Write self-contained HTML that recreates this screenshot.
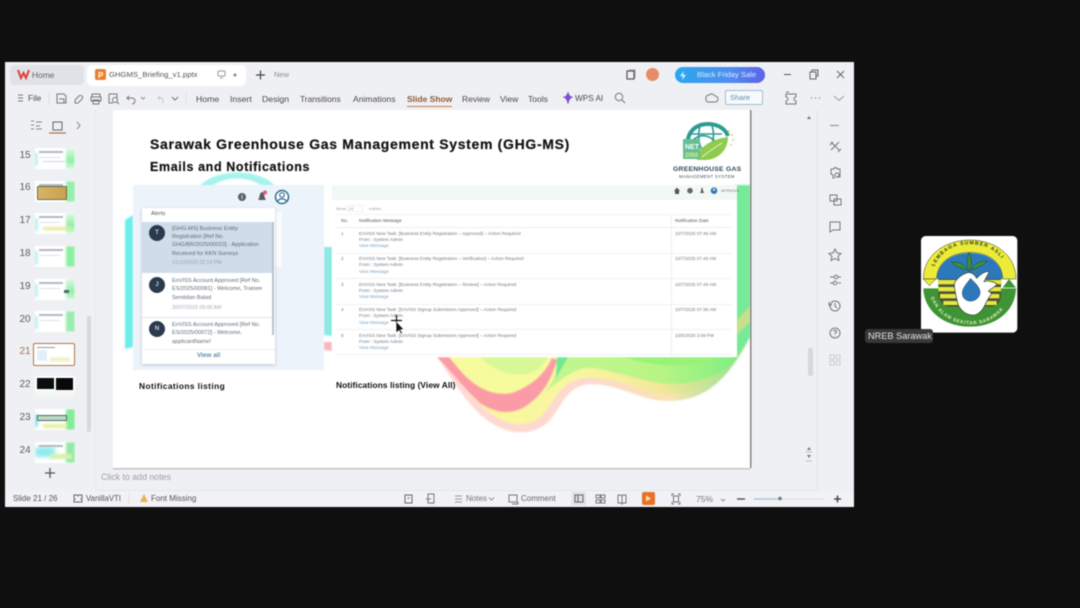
<!DOCTYPE html>
<html lang="en"><head><meta charset="utf-8"><title>GHGMS Briefing</title>
<style>
html,body{margin:0;padding:0;width:1080px;height:608px;overflow:hidden;background:#0f0f10;font-family:"Liberation Sans",sans-serif}
#w{position:absolute;left:0;top:0;width:1080px;height:608px;filter:blur(.4px)}
.a{position:absolute}
.t{position:absolute;white-space:nowrap;line-height:12px;height:12px;color:#4a4a4a}
.n{position:absolute;left:19px;width:12px;font-size:10px;line-height:12px;color:#5c5c5c;text-align:center}
.th{position:absolute;left:35px;width:40px;height:21px;background:#fff;overflow:hidden}
.th i{position:absolute;display:block}
.g{right:0;top:0;width:9px;height:21px;background:linear-gradient(180deg,#dff8e4,#8ef0a6 60%,#d9f8df);filter:blur(1px)}
.c{left:-1px;top:5px;width:4px;height:13px;background:#bff3ee;filter:blur(1px)}
.l{left:4px;top:3px;width:24px;height:2px;background:#b4bac0}
.l2{left:5px;top:9px;width:20px;height:1px;background:#dde3e8}
.r{position:absolute;font-size:4.6px;line-height:6px;height:6px;white-space:nowrap;color:#757a82;left:359px}
.b{color:#7ba6c6}
.ai{position:absolute;font-size:5.6px;line-height:8px;height:8px;white-space:nowrap;color:#626a76;left:172px}
.av{position:absolute;left:149px;width:16px;height:16px;border-radius:50%;background:#2c3a4e;color:#c9d2dc;font-size:6px;line-height:16px;text-align:center;font-weight:bold}
</style></head><body><div id="w">

<!-- window -->
<div class="a" style="left:5px;top:62px;width:849px;height:445px;background:#eff0f4"></div>
<div class="a" style="left:10px;top:65px;width:74px;height:20px;background:#e1e2e7;border-radius:4px"></div>
<div class="a" style="left:87px;top:65px;width:159px;height:21px;background:#fff;border-radius:5px"></div>
<div class="a" style="left:95px;top:110px;width:1px;height:380px;background:#e6e7eb"></div>
<div class="a" style="left:817px;top:110px;width:1px;height:385px;background:#e3e4e8"></div>
<div class="a" style="left:95px;top:490px;width:722px;height:1px;background:#e6e7eb"></div>
<div class="a" style="left:5px;top:491px;width:849px;height:16px;background:#f1f2f5"></div>

<!-- tab and menu text -->
<div class="t" style="left:32px;top:69px;font-size:8.4px;color:#666">Home</div>
<div class="t" style="left:109px;top:69px;font-size:7.7px;color:#555">GHGMS_Briefing_v1.pptx</div>
<div class="t" style="left:274px;top:69px;font-size:7.5px;color:#8a8d94">New</div>
<div class="t" style="left:28px;top:93px;font-size:8.2px">File</div>
<div class="t" style="left:196px;top:93px;font-size:8.7px">Home</div>
<div class="t" style="left:230px;top:93px;font-size:8.7px">Insert</div>
<div class="t" style="left:262px;top:93px;font-size:8.7px">Design</div>
<div class="t" style="left:300px;top:93px;font-size:8.4px">Transitions</div>
<div class="t" style="left:353px;top:93px;font-size:8.6px">Animations</div>
<div class="t" style="left:407px;top:93px;font-size:8.5px;font-weight:bold;color:#8f5a3a">Slide Show</div>
<div class="a" style="left:407px;top:106px;width:45px;height:1px;background:#c9814f"></div>
<div class="t" style="left:462px;top:93px;font-size:8.5px">Review</div>
<div class="t" style="left:500px;top:93px;font-size:8.5px">View</div>
<div class="t" style="left:528px;top:93px;font-size:8.5px">Tools</div>
<div class="t" style="left:575px;top:93px;font-size:8.2px">WPS AI</div>

<div class="a" style="left:675px;top:67px;width:90px;height:16px;border-radius:8px;background:linear-gradient(90deg,#2aa8ef,#4f8df0 60%,#5d63e8)"></div>
<div class="t" style="left:697px;top:69px;font-size:7.6px;color:#d8ecfb">Black Friday Sale</div>
<div class="a" style="left:725px;top:90px;width:38px;height:15px;border:1px solid #9cc0d4;border-radius:2px;background:#f7f9fb;box-sizing:border-box"></div>
<div class="t" style="left:730px;top:92px;font-size:7.5px;color:#5d8fb0">Share</div>
<div class="a" style="left:646px;top:68px;width:13px;height:13px;border-radius:50%;background:#e78c66"></div>

<!-- thumbnails -->
<div class="n" style="top:150px">15</div><div class="n" style="top:182px">16</div><div class="n" style="top:215px">17</div><div class="n" style="top:248px">18</div><div class="n" style="top:281px">19</div><div class="n" style="top:314px">20</div><div class="n" style="top:346px;color:#a5714f">21</div><div class="n" style="top:379px">22</div><div class="n" style="top:412px">23</div><div class="n" style="top:445px">24</div>
<div class="th" style="top:148px"><i class="g"></i><i class="c"></i><i class="l"></i><i class="l2"></i><i style="left:8px;top:13px;width:22px;height:1px;background:#cfd6da"></i></div>
<div class="th" style="top:181px"><i class="g" style="background:#96eeaa"></i><i class="l"></i><i style="left:2px;top:5px;width:28px;height:12px;background:linear-gradient(90deg,#d7b468,#c9a24e);border:1px solid #6a6a50;border-radius:1px"></i></div>
<div class="th" style="top:213px"><i class="g"></i><i class="c"></i><i class="l"></i><i class="l2"></i><i style="left:8px;top:14px;width:28px;height:3px;background:#e8e89a;filter:blur(1px)"></i></div>
<div class="th" style="top:246px"><i class="g" style="background:#8cf0a4"></i><i class="c"></i><i class="l"></i><i class="l2"></i></div>
<div class="th" style="top:279px"><i class="g"></i><i class="c"></i><i class="l"></i><i class="l2"></i><i style="left:29px;top:11px;width:5px;height:3px;background:#56647a"></i></div>
<div class="th" style="top:311px"><i class="g" style="background:#9cecb0"></i><i class="c"></i><i class="l"></i><i class="l2"></i></div>
<div class="a" style="left:33px;top:343px;width:42px;height:23px;box-sizing:border-box;border:1.5px solid #b0764d;border-radius:2px;background:#fff;overflow:hidden"><i class="a" style="left:3px;top:3px;width:18px;height:1px;background:#999"></i><i class="a" style="left:3px;top:6px;width:10px;height:11px;background:#e4eef8"></i><i class="a" style="left:16px;top:14px;width:20px;height:3px;background:#eaeeb0;filter:blur(1px)"></i></div>
<div class="th" style="top:376px"><i style="left:2px;top:2px;width:17px;height:11px;background:#07100f"></i><i style="left:21px;top:2px;width:17px;height:12px;background:#0a0808"></i><i style="left:0;top:15px;width:40px;height:6px;background:#f3f6f3"></i></div>
<div class="th" style="top:409px"><i class="g" style="background:#84ec96"></i><i class="c" style="background:#8cecee"></i><i style="left:2px;top:6px;width:28px;height:4px;background:#bcd9c8;border:1px solid #506a58"></i><i style="left:8px;top:15px;width:24px;height:4px;background:#e8f0a0;filter:blur(1px)"></i></div>
<div class="th" style="top:442px;"><i class="g" style="background:#92eaa4"></i><i style="left:0;top:5px;width:20px;height:10px;background:#8eeaf0;filter:blur(2px)"></i><i class="l"></i><i style="left:15px;top:12px;width:22px;height:5px;background:#d6f2a8;filter:blur(1px)"></i></div>
<div class="a" style="left:87px;top:316px;width:4px;height:116px;background:#d7d8dc;border-radius:2px"></div>
<div class="a" style="left:808px;top:348px;width:5px;height:28px;background:#d7d8dc;border-radius:2px"></div>

<!-- slide -->
<div class="a" style="left:113px;top:110px;width:637px;height:358px;background:#fff;box-shadow:1.5px 0 0 #858585,0 1.5px 0 #c4c4c4"></div>
<svg class="a" style="left:113px;top:110px" width="637" height="358" viewBox="113 110 637 358">
<defs>
<linearGradient id="w1" x1="0" x2="1" y1="0" y2="0"><stop offset="0" stop-color="#f9f99c"/><stop offset=".45" stop-color="#f7f6a0"/><stop offset=".72" stop-color="#f4e79a"/><stop offset=".88" stop-color="#bfe490"/><stop offset="1" stop-color="#78e882"/></linearGradient>
<linearGradient id="w2" x1="0" x2="1" y1="0" y2="0"><stop offset="0" stop-color="#ffd9d6"/><stop offset=".5" stop-color="#fdd9cc"/><stop offset=".75" stop-color="#f8e4b0"/><stop offset="1" stop-color="#84e488"/></linearGradient>
<linearGradient id="w3" x1="0" x2="1" y1="0" y2="0"><stop offset="0" stop-color="#c2f690"/><stop offset=".6" stop-color="#b8f584"/><stop offset="1" stop-color="#7eee80"/></linearGradient>
</defs>
<g style="filter:blur(.7px)">
<path d="M200 186 C215 168 260 168 275 186 L262 186 C248 176 226 176 212 186Z" fill="#a6f3ee"/>
<path d="M125 220 L133 215 L133 347 L125 349Z" fill="#6eeee8"/>
<path d="M324 247 L332 247 L332 336 L324 335Z" fill="#8ce9e6"/>
<path d="M324 342 L332 342 L332 351 L324 350Z" fill="#f7b8bc"/>
<path d="M735 185 L750 185 L750 337 L737 357 L735 357Z" fill="#76ea98"/>
<path d="M737 320 L750 306 L750 322 L737 335Z" fill="#c6e08c"/>
<path d="M437 357 C452 378 470 412 495 425 C512 435 535 436 550 420 C562 405 568 385 590 384 C620 384 640 401 668 401 C705 401 728 380 750 337 L737 357Z" fill="url(#w2)"/>
<path d="M442 357 C458 378 475 405 498 418 C515 427 532 427 545 412 C555 400 562 380 585 378 C615 376 640 392 668 394 C700 395 725 375 747 338 L737 357Z" fill="url(#w1)"/>
<path d="M449 357 C465 380 485 395 510 394 C532 390 546 375 553 357Z" fill="#f6fb9e"/>
<path d="M480 357 C495 372 515 378 530 373 C540 370 545 363 547 357Z" fill="#d8f898"/>
<path d="M437 357 C450 370 462 386 480 403 C498 415 515 415 530 403 C545 392 552 376 557 360 L552 358 C546 372 534 385 512 393 C490 397 472 385 458 368 L449 357Z" fill="#fb9ba6"/>
<path d="M557 357 L737 357 C725 372 700 385 668 384 C640 382 610 368 588 368 C575 368 560 380 545 392 C555 380 560 368 557 357Z" fill="url(#w3)"/>
<path d="M557 357 L568 357 L556 378Z" fill="#6fe890"/>
<path d="M625 357 C650 366 690 370 715 357Z" fill="#98f278"/>
</g>
</svg>

<div class="t" style="left:150px;top:136px;height:17px;line-height:17px;font-size:14px;font-weight:bold;color:#111;letter-spacing:.68px;-webkit-text-stroke:.2px #111">Sarawak Greenhouse Gas Management System (GHG-MS)</div>
<div class="t" style="left:150px;top:159px;height:16px;line-height:16px;font-size:12.5px;font-weight:bold;color:#111;letter-spacing:.62px;-webkit-text-stroke:.2px #111">Emails and Notifications</div>

<!-- GHG logo -->
<svg class="a" style="left:675px;top:120px" width="70" height="45" viewBox="675 120 70 45">
<path d="M688 146 C686 132 696 124 708 124 C719 124 726 130 728 136" fill="none" stroke="#2c9c92" stroke-width="4"/>
<path d="M693 140 C700 134 708 134 716 142 M700 126 C698 134 698 142 702 150 M712 126 C714 132 714 136 712 144 M690 134 L722 134" fill="none" stroke="#2c9c92" stroke-width="1.6"/>
<path d="M697 160 C697 147 712 139 728 137 C728 150 718 160 705 160Z" fill="#8fcc4e"/>
<path d="M702 157 C708 152 714 148 722 143" stroke="#e6f3c9" stroke-width="1" fill="none"/>
<rect x="683" y="139" width="17" height="20" fill="#64bf94"/>
<text x="685" y="149" font-size="7" font-weight="bold" fill="#f1fff6">NET</text>
<text x="685" y="157" font-size="6" font-weight="bold" fill="#e6ec82">2050</text>
<circle cx="729" cy="131" r="1" fill="#d6d27a"/><circle cx="732" cy="135" r="1" fill="#d6d27a"/><circle cx="733" cy="140" r="1" fill="#d6d27a"/><circle cx="731" cy="145" r="1" fill="#d6d27a"/>
</svg>
<div class="t" style="left:673px;top:164px;font-size:6.8px;font-weight:bold;color:#2e4a58;letter-spacing:.25px">GREENHOUSE GAS</div>
<div class="t" style="left:679px;top:171px;font-size:4.4px;color:#3d5562;letter-spacing:.3px">MANAGEMENT SYSTEM</div>

<!-- notifications panel -->
<div class="a" style="left:133px;top:185px;width:191px;height:185px;background:#edf3fb"></div>
<div class="a" style="left:275px;top:212px;width:7px;height:55px;background:#fafbfd"></div>
<div class="a" style="left:142px;top:208px;width:133px;height:156px;background:#fff;box-shadow:0 1px 3px rgba(70,90,110,.3)"></div>
<div class="a" style="left:142px;top:222px;width:131px;height:51px;background:#cfdcea"></div>
<div class="a" style="left:272px;top:222px;width:2px;height:113px;background:#b6c2cf"></div>
<div class="a" style="left:142px;top:317px;width:130px;height:1px;background:#dde2e8"></div>
<div class="a" style="left:142px;top:349px;width:133px;height:1px;background:#edf0f3"></div>
<div class="ai" style="left:151px;top:210px;color:#555">Alerts</div>
<div class="av" style="top:225px">T</div><div class="av" style="top:277px">J</div><div class="av" style="top:321px">N</div>
<div class="ai" style="top:225px">[GHG-MS] Business Entity</div>
<div class="ai" style="top:233px">Registration [Ref No.</div>
<div class="ai" style="top:241px">GHG/BR/2025/00023] - Application</div>
<div class="ai" style="top:250px">Received for KKN Surveys</div>
<div class="ai" style="top:259px;color:#9aa5b2;font-size:5.2px">21/10/2025 02:19 PM</div>
<div class="ai" style="top:277px">EnVISS Account Approved [Ref No.</div>
<div class="ai" style="top:285px">ES/2025/00081] - Welcome, Trainee</div>
<div class="ai" style="top:294px">Sembilan Balad</div>
<div class="ai" style="top:304px;color:#a3abb5;font-size:5.2px">30/07/2025 09:09 AM</div>
<div class="ai" style="top:321px">EnVISS Account Approved [Ref No.</div>
<div class="ai" style="top:329px">ES/2025/00072] - Welcome,</div>
<div class="ai" style="top:338px">applicantName!</div>
<div class="ai" style="left:197px;top:352px;color:#5f8eb0;font-weight:bold;font-size:6.4px">View all</div>
<svg class="a" style="left:234px;top:188px" width="56" height="18" viewBox="234 188 56 18">
<circle cx="242" cy="197" r="4" fill="#5a6068"/><rect x="241.5" y="195" width="1" height="4" fill="#ddd"/>
<path d="M258 200 C260 198 259 193 262 192 C265 193 264 198 266 200Z" fill="#5b5a66"/><circle cx="265" cy="192.500" r="2" fill="#e0586c"/>
<circle cx="282" cy="197" r="6.500" fill="#fff" stroke="#2e6f92" stroke-width="1.500"/><circle cx="282" cy="195" r="2.300" fill="none" stroke="#2e6f92" stroke-width="1.200"/><path d="M277.500 201.500 C279 198 285 198 286.500 201.500" fill="none" stroke="#2e6f92" stroke-width="1.200"/>
</svg>
<div class="t" style="left:139px;top:380px;font-size:8.4px;font-weight:bold;color:#111;letter-spacing:.4px">Notifications listing</div>

<!-- table card -->
<div class="a" style="left:332px;top:185px;width:405px;height:172px;background:#fff"></div>
<div class="a" style="left:332px;top:185px;width:405px;height:15px;background:#f2f8f6"></div>
<div class="a" style="left:671px;top:214px;width:1px;height:141px;background:#eceef1"></div>
<div class="a" style="left:336px;top:214px;width:396px;height:1px;background:#f3f4f6"></div>
<div class="a" style="left:336px;top:227px;width:396px;height:1px;background:#eceef1"></div>
<div class="a" style="left:336px;top:253px;width:396px;height:1px;background:#f0f1f4"></div>
<div class="a" style="left:336px;top:278px;width:396px;height:1px;background:#f0f1f4"></div>
<div class="a" style="left:336px;top:304px;width:396px;height:1px;background:#f0f1f4"></div>
<div class="a" style="left:336px;top:329px;width:396px;height:1px;background:#f0f1f4"></div>
<div class="a" style="left:336px;top:354px;width:396px;height:1px;background:#f0f1f4"></div>
<svg class="a" style="left:670px;top:185px" width="60" height="12" viewBox="670 185 60 12">
<path d="M674 191 L677 187.500 L680 191 L679 191 L679 194 L675 194 L675 191Z" fill="#555"/>
<circle cx="690" cy="190.700" r="2.800" fill="#666"/>
<path d="M700 193 C701.500 192 701 188 702 187.500 C703 188 702.500 192 704.500 193Z" fill="#555"/>
<circle cx="714" cy="190.700" r="3.300" fill="#2f78b8"/><circle cx="714" cy="189.700" r="1.100" fill="#e8f0f8"/>
</svg>
<div class="r" style="left:721px;top:188px;font-size:3.8px">APPROVE</div>
<div class="r" style="left:336px;top:206px;font-size:4px;color:#999">Show</div>
<div class="a" style="left:347px;top:205px;width:16px;height:7px;border:1px solid #f0f0f0;box-sizing:border-box"></div>
<div class="r" style="left:349px;top:206px;font-size:4px;color:#999">10</div>
<div class="r" style="left:369px;top:206px;font-size:4px;color:#999">entries</div>
<div class="r" style="left:341px;top:218px;color:#555">No.</div>
<div class="r" style="top:218px;color:#555">Notification Message</div>
<div class="r" style="left:675px;top:218px;color:#555">Notification Date</div>

<div class="r" style="left:341px;top:231px">1</div>
<div class="r" style="top:231px">EnVISS New Task: [Business Entity Registration – Approved] – Action Required</div>
<div class="r" style="top:237px">From : System Admin</div>
<div class="r b" style="top:243px">View Message</div>
<div class="r" style="left:675px;top:231px">10/7/2025 07:49 AM</div>

<div class="r" style="left:341px;top:256px">2</div>
<div class="r" style="top:256px">EnVISS New Task: [Business Entity Registration – Verification] – Action Required</div>
<div class="r" style="top:262px">From : System Admin</div>
<div class="r b" style="top:269px">View Message</div>
<div class="r" style="left:675px;top:256px">10/7/2025 07:49 AM</div>

<div class="r" style="left:341px;top:282px">3</div>
<div class="r" style="top:282px">EnVISS New Task: [Business Entity Registration – Review] – Action Required</div>
<div class="r" style="top:288px">From : System Admin</div>
<div class="r b" style="top:294px">View Message</div>
<div class="r" style="left:675px;top:282px">10/7/2025 07:49 AM</div>

<div class="r" style="left:341px;top:307px">4</div>
<div class="r" style="top:307px">EnVISS New Task: [EnVISS Signup Submission Approved] – Action Required</div>
<div class="r" style="top:313px">From : System Admin</div>
<div class="r b" style="top:320px">View Message</div>
<div class="r" style="left:675px;top:307px">10/7/2025 07:39 AM</div>

<div class="r" style="left:341px;top:333px">5</div>
<div class="r" style="top:333px">EnVISS New Task: [EnVISS Signup Submission Approved] – Action Required</div>
<div class="r" style="top:339px">From : System Admin</div>
<div class="r b" style="top:345px">View Message</div>
<div class="r" style="left:675px;top:333px">10/5/2025 3:09 PM</div>

<div class="t" style="left:336px;top:379px;font-size:8.4px;font-weight:bold;color:#111;letter-spacing:.07px">Notifications listing (View All)</div>

<!-- cursor -->
<svg class="a" style="left:390px;top:314px" width="18" height="22" viewBox="390 314 18 22">
<path d="M396 321 L396 333 L399 330.500 L401 334 L402.500 333 L400.500 329.800 L404 329.500Z" fill="#111" stroke="#fff" stroke-width=".7"/>
<path d="M391 320.500 H402 M396.500 315 V322" stroke="#111" stroke-width="1.200"/>
</svg>

<!-- chrome icons -->
<svg class="a" style="left:0;top:0" width="1080" height="608" viewBox="0 0 1080 608" fill="none" stroke="#777" stroke-width="1">
<path d="M18 70 L21 78 L23.500 73 L26 78 L29 70" stroke="#d8433f" stroke-width="2"/>
<rect x="95" y="69" width="11" height="11" rx="2" fill="#e8812f" stroke="none"/>
<text x="98" y="78" font-size="8" font-weight="bold" fill="#fff" stroke="none" font-family="Liberation Sans">P</text>
<rect x="218" y="71" width="7" height="5" rx="1" stroke="#999"/><path d="M220 78 h3" stroke="#999"/>
<circle cx="235" cy="75" r="1.500" fill="#888" stroke="none"/>
<path d="M256 75 h9 M260.500 70.500 v9" stroke="#444" stroke-width="1.200"/>
<path d="M18 95 h5 M18 98 h5 M18 101 h5"/>
<path d="M49 92 V105" stroke="#ddd"/>
<path d="M57 94 h7 l2 2 v7 h-9Z M59 99 h5 v4 h-5" />
<path d="M75 100 l4 -4 a2 2 0 0 1 3 3 l-4 4 M75 100 l0 3 h3"/>
<path d="M92 97 v-3 h8 v3 M91 97 h10 v4 h-9 h-1Z M93 100 h6 v4 h-6Z"/>
<path d="M109 94 h8 v4 M109 94 v9 h4"/><circle cx="115" cy="100" r="2.500"/><path d="M117 102 l2 2"/>
<path d="M129 96 l-2 2 l2 2 M128 98 h4 a3 3 0 0 1 0 6"/><path d="M141 97 l2 2 l2 -2" stroke-width=".8"/>
<path d="M160 96 l-2 2 l2 2 M159 98 h3 a3 3 0 0 1 0 5" stroke="#c8c9ce"/>
<path d="M172 97 l3 3 l3 -3"/>
<path d="M186 92 V105" stroke="#ddd"/>
<path d="M563 97 C566 97 567 95 568 92 C569 95 570 97 573 97 C570 98 569 100 568 104 C567 100 566 98 563 97Z" fill="#7b4fd0" stroke="#7b4fd0" stroke-width=".5"/>
<circle cx="619" cy="97" r="3.700"/><path d="M622 100 l3 3"/>
<rect x="627" y="71" width="7" height="8" stroke="#555" stroke-width="1.200"/><path d="M629 70 h6 v8" stroke="#999"/>
<path d="M684 71 L680 76 h3 l-1 4 l4 -5 h-3 l1 -4Z" fill="#e6f3fd" stroke="none"/>
<path d="M784 74.500 h7" stroke="#555"/>
<rect x="810" y="72" width="6" height="7" stroke="#666"/><path d="M812 72 v-2 h6 v6 h-2" stroke="#666"/>
<path d="M837 71 l7 7 M844 71 l-7 7" stroke="#666"/>
<path d="M706 99 a3 3 0 0 1 3 -4 a4 4 0 0 1 6 1 a3 3 0 0 1 0 6 h-7 a2.500 2.500 0 0 1 -2 -3Z"/>
<path d="M786 94 h10 v3 a2 2 0 0 0 0 4 v3 h-10 v-3 a2 2 0 0 0 0 -4Z M786 92 h3"/>
<path d="M811 98 h1 M815 98 h1 M819 98 h1" stroke-width="1.200"/>
<path d="M834 96 l5 4.500 l5 -4.500" stroke="#999"/>
<path d="M31 121 h3 M31 125 h3 M31 129 h3 M36 122 h6 M36 126 h4 M36 129 h6" stroke="#888"/>
<rect x="53" y="122" width="9" height="8" stroke="#666"/><path d="M49 133 h17" stroke="#b0764d" stroke-width="1.200"/>
<path d="M77 122 l3 3.500 l-3 3.500" stroke="#888"/>
<path d="M45 473 h10 M50 468 v10" stroke="#555" stroke-width="1.300"/>
<path d="M809 116 l2 3 h-4Z M809 447 l2 3 h-4Z M809 458 l2 -3 h-4Z" fill="#777" stroke="none"/>
<path d="M806 452 h6 M806 461 h6" stroke="#aaa" stroke-width=".8"/>
<!-- right rail -->
<path d="M830 125.500 h9" stroke="#888"/>
<path d="M831 142 l8 8 M839 142 l-8 8 M830 145 l3 -3 M838 152 l3 -3"/>
<path d="M831 169 h3 a1.500 1.500 0 0 1 3 0 h3 v8 h-3 M831 169 v5 l2 1 v3 h2"/><circle cx="837" cy="175" r="2"/>
<rect x="830" y="195" width="7" height="6"/><rect x="834" y="199" width="7" height="6"/>
<path d="M830 222 h10 v8 h-7 l-3 2Z"/>
<path d="M835 249 l2 4 l4 .5 l-3 3 l1 4 l-4 -2 l-4 2 l1 -4 l-3 -3 l4 -.5Z"/>
<path d="M830 277 h4 M838 277 h3 M830 283 h3 M838 283 h3"/><circle cx="836" cy="277" r="1.800"/><circle cx="835" cy="283" r="1.800"/>
<circle cx="835" cy="306" r="5"/><path d="M835 303 v3 l2 2 M829 302 v3 h3"/>
<circle cx="835" cy="333" r="5"/><path d="M833.500 331.500 a1.500 1.500 0 0 1 3 .5 l-1.500 1.500 v.7 M835 336 v.5"/>
<rect x="830" y="355" width="4" height="4" stroke="#ccc"/><rect x="836" y="355" width="4" height="4" stroke="#ccc"/><rect x="830" y="361" width="4" height="4" stroke="#ccc"/><rect x="836" y="361" width="4" height="4" stroke="#ccc"/>
<!-- status bar -->
<path d="M74 495 h3 l1 1 l1 -1 h3 v3 l-1 1 l1 1 v2 h-8 v-2 l1 -1 l-1 -1Z" stroke="#666"/>
<path d="M129 494 V504" stroke="#ecdede"/>
<path d="M144 494 l4 8 h-8Z" fill="#efb14f" stroke="none"/>
<rect x="405" y="495" width="7" height="8" stroke="#666"/><path d="M407.500 498 h2" stroke="#666"/>
<rect x="428" y="494" width="6" height="9"/><path d="M426 499 h5 M432 503 v1"/>
<path d="M455 496 h7 M455 499 h7 M455 502 h7" stroke="#999"/>
<rect x="509" y="495" width="8" height="7"/><path d="M512 504 h6 v-2" />
<rect x="572" y="492" width="14" height="13" fill="#dfe0e4" stroke="none"/>
<rect x="575" y="495" width="8" height="7" stroke="#666"/><path d="M578 495 v7" stroke="#666"/>
<rect x="596" y="495" width="4" height="3"/><rect x="601" y="495" width="4" height="3"/><rect x="596" y="500" width="4" height="3"/><rect x="601" y="500" width="4" height="3"/>
<path d="M618 495 h3 l1 1 l1 -1 h3 v8 h-3 l-1 1 l-1 -1 h-3Z M622 496 v7"/>
<rect x="642" y="492" width="13" height="13" rx="2" fill="#e8702a" stroke="none"/>
<path d="M646 495.500 l5 3 l-5 3Z" fill="#f9e6a0" stroke="none"/>
<path d="M672 496 v-2 h2 M678 494 h2 v2 M680 502 v2 h-2 M674 504 h-2 v-2"/><rect x="673.500" y="496" width="5" height="6"/>
<path d="M721 499 l2 2 l2 -2" stroke-width=".8"/>
<path d="M737 499 h8" stroke="#444" stroke-width="1.300"/>
<path d="M754 499 h24" stroke="#9dc0dc" stroke-width="1.200"/><path d="M782 499 h42" stroke="#dcdde0" stroke-width="1"/>
<circle cx="780" cy="498.500" r="1.800" fill="#777" stroke="none"/>
<path d="M834 499 h7 M837.500 495.500 v7" stroke="#333" stroke-width="1.300"/>
</svg>
<div class="t" style="left:13px;top:493px;font-size:8px;color:#555">Slide 21 / 26</div>
<div class="t" style="left:86px;top:493px;font-size:7.8px;color:#555">VanillaVTI</div>
<div class="t" style="left:151px;top:493px;font-size:8px;color:#555">Font Missing</div>
<div class="t" style="left:466px;top:493px;font-size:8px;color:#777">Notes</div>
<div class="t" style="left:521px;top:493px;font-size:8px;color:#666">Comment</div>
<div class="t" style="left:696px;top:493px;font-size:8.5px;color:#777">75%</div>
<div class="t" style="left:101px;top:471px;font-size:8.8px;color:#a0a0a3">Click to add notes</div>
<svg class="a" style="left:488px;top:496px" width="8" height="6"><path d="M1 1.500 l2.500 2.500 l2.500 -2.500" fill="none" stroke="#777" stroke-width=".8"/></svg>

<!-- NREB logo -->
<svg class="a" style="left:860px;top:225px" width="180" height="125" viewBox="0 0 540 375">
<rect x="183" y="33" width="289" height="290" rx="14" fill="#fff"/>
<path d="M190 162 C190 90 255 45 330 45 C405 45 468 90 468 162 L428 162 C428 112 385 82 330 82 C275 82 230 112 230 162Z" fill="#ecec38" stroke="#2e3a24" stroke-width="1.500"/>
<path d="M230 162 C232 112 275 84 330 84 C385 84 426 112 428 162Z" fill="#2d78bb"/>
<path d="M190 190 H468 C466 260 405 305 330 305 C255 305 192 260 190 190Z" fill="#3e9434"/>
<path d="M235 162 H423 V215 C420 235 405 245 395 245 H265 C250 245 240 230 235 215Z" fill="#4b5438"/>
<g fill="#e6e640"><rect x="235" y="165" width="190" height="13"/><rect x="235" y="186" width="188" height="13"/><rect x="240" y="207" width="178" height="13"/><rect x="250" y="228" width="160" height="12"/></g>
<path d="M190 162 L228 162 L208 182Z" fill="#ecec38" stroke="#2e3a24" stroke-width="1.500"/>
<path d="M428 188 L447 162 L468 188Z" fill="#3e9434"/>
<path d="M283 175 C288 165 300 150 322 143 C335 140 345 150 350 160 C358 150 375 138 388 140 L372 170 C385 165 405 172 412 178 L385 198 L395 205 L378 232 C372 250 360 265 345 270 C325 272 305 262 295 240 C290 220 283 200 283 175Z" fill="#fff" stroke="#2a3a24" stroke-width="2"/>
<path d="M332 160 C318 178 307 190 307 205 C307 220 320 230 335 228 C352 226 362 212 360 198 C355 180 342 172 332 160Z" fill="#2d78bb" stroke="#1d3d5d" stroke-width="1.500"/>
<path d="M328 140 C320 120 320 100 327 82 C335 100 338 122 328 140Z M322 135 C305 130 285 125 275 112 C295 108 315 118 322 135Z M335 135 C350 128 370 122 382 108 C360 106 340 118 335 135Z" fill="#3f8f3a" stroke="#21421f" stroke-width="1.500"/>
<defs>
<path id="arc1" d="M222 125 C250 70 290 58 330 58 C375 58 415 75 440 125"/>
<path id="arc2" d="M212 218 C235 275 285 298 335 298 C385 298 430 270 447 218"/>
</defs>
<text font-family="Liberation Sans" font-weight="bold" font-size="15" fill="#2c3a24" letter-spacing="3.300"><textPath href="#arc1">LEMBAGA SUMBER ASLI</textPath></text>
<text font-family="Liberation Sans" font-weight="bold" font-size="14" fill="#e6ecc0" letter-spacing="2.200"><textPath href="#arc2">DAN ALAM SEKITAR SARAWAK</textPath></text>
</svg>
<div class="a" style="left:865px;top:329px;width:68px;height:14px;background:#383838;border-radius:3px"></div>
<div class="t" style="left:868px;top:330px;font-size:9.2px;color:#e4e4e4">NREB Sarawak</div>
</div></body></html>
